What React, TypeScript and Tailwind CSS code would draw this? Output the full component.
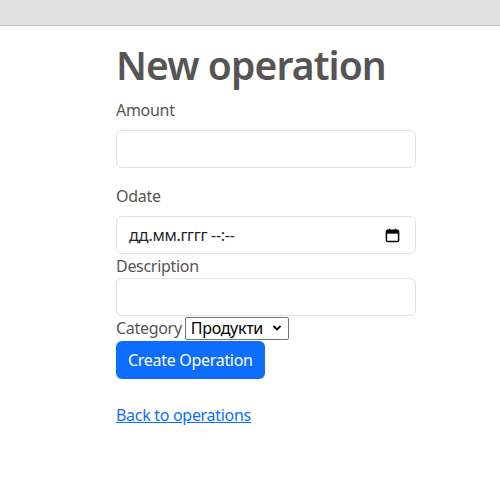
import React from "react";

function CalendarIcon() {
    return (
        <svg width="15" height="15" viewBox="0 0 16 16" className="text-black">
            <rect x="1.5" y="2.5" width="13" height="12" rx="1.5" fill="none" stroke="currentColor" strokeWidth="1.6" />
            <rect x="1.5" y="2.5" width="13" height="3.5" fill="currentColor" />
            <rect x="4" y="0.8" width="1.6" height="2.5" fill="currentColor" />
            <rect x="10.4" y="0.8" width="1.6" height="2.5" fill="currentColor" />
        </svg>
    );
}

export default function App() {
    return (
        <div className="min-h-[500px] bg-white font-['Segoe_UI','Noto_Sans',sans-serif] tracking-[-0.3px] text-[#555]">
            {/* верхняя полоса */}
            <div className="h-[26px] border-b border-[#c2c2c2] bg-gradient-to-b from-[#dfdfdf] to-[#e3e3e3]" />

            <main className="ml-[116px] w-[300px] pt-[14px]">
                <h1 className="whitespace-nowrap text-[39px] leading-[50px] font-semibold tracking-[-0.9px] text-[#555] mb-[8px]">
                    New operation
                </h1>

                <form className="flex flex-col">
                    {/* Amount */}
                    <label className="text-base leading-6 mb-2">Amount</label>
                    <div className="h-[38px] rounded-md border border-[#dee2e6] bg-white" />

                    {/* Odate */}
                    <label className="text-base leading-6 mt-4 mb-2">Odate</label>
                    <div className="h-[38px] rounded-md border border-[#dee2e6] bg-white flex items-center justify-between pl-3 pr-[15px] text-[#212529]">
                        <span className="text-base">дд.мм.гггг --:--</span>
                        <CalendarIcon />
                    </div>

                    {/* Description */}
                    <label className="text-base leading-6">Description</label>
                    <div className="h-[38px] rounded-md border border-[#dee2e6] bg-white" />

                    {/* Category */}
                    <div className="flex items-center h-6">
                        <span className="text-base leading-6">Category</span>
                        <div className="ml-[3px] h-[23px] w-[104px] border border-[#767676] rounded-[2px] flex items-center justify-between pl-[5px] pr-[6px] text-black text-base">
                            <span>Продукти</span>
                            <svg width="10" height="10" viewBox="0 0 10 10">
                                <path d="M1.5 3 L5 6.5 L8.5 3" fill="none" stroke="black" strokeWidth="1.8" />
                            </svg>
                        </div>
                    </div>

                    <div>
                        <button
                            type="button"
                            className="mt-[1px] h-[38px] px-3 rounded-md bg-[#0d6efd] text-white text-base"
                        >
                            Create Operation
                        </button>
                    </div>
                </form>

                <p className="mt-6 leading-6">
                    <a href="#" className="text-[#0d6efd] underline">
                        Back to operations
                    </a>
                </p>
            </main>
        </div>
    );
}
